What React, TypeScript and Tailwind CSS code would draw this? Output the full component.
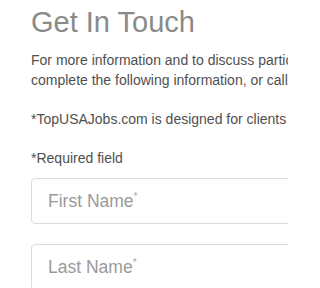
export default function App() {
  return (
    <div className="w-[288px] h-[288px] overflow-hidden bg-white font-['Liberation_Sans',Arial,sans-serif]">
      <div className="w-[520px] pl-[31px] pt-[6px]">
        <h1 className="text-[29px] leading-[32px] text-[#8a8a8a] font-normal">Get In Touch</h1>
        <p className="mt-[12px] text-[14px] leading-[20px] text-[#505050] whitespace-nowrap">
          For more information and to discuss particular opportunities, please
          <br />
          complete the following information, or call us directly.
        </p>
        <p className="mt-[19px] text-[14px] leading-[20px] text-[#505050] whitespace-nowrap">
          *TopUSAJobs.com is designed for clients who are looking to hire.
        </p>
        <p className="mt-[19px] text-[14px] leading-[20px] text-[#505050]">*Required field</p>

        <form className="mt-[10px] flex flex-col gap-[20px]">
          <div className="h-[46px] border border-[#dcdcdc] rounded-[4px] flex items-center pl-[16px]">
            <span className="text-[17.5px] text-[#9a9a9a]">
              First Name<span className="text-[10px] align-top relative top-[1px] text-[#aaaaaa]">*</span>
            </span>
          </div>
          <div className="h-[46px] border border-[#dcdcdc] rounded-[4px] flex items-center pl-[16px]">
            <span className="text-[17.5px] text-[#9a9a9a]">
              Last Name<span className="text-[10px] align-top relative top-[1px] text-[#aaaaaa]">*</span>
            </span>
          </div>
        </form>
      </div>
    </div>
  );
}
